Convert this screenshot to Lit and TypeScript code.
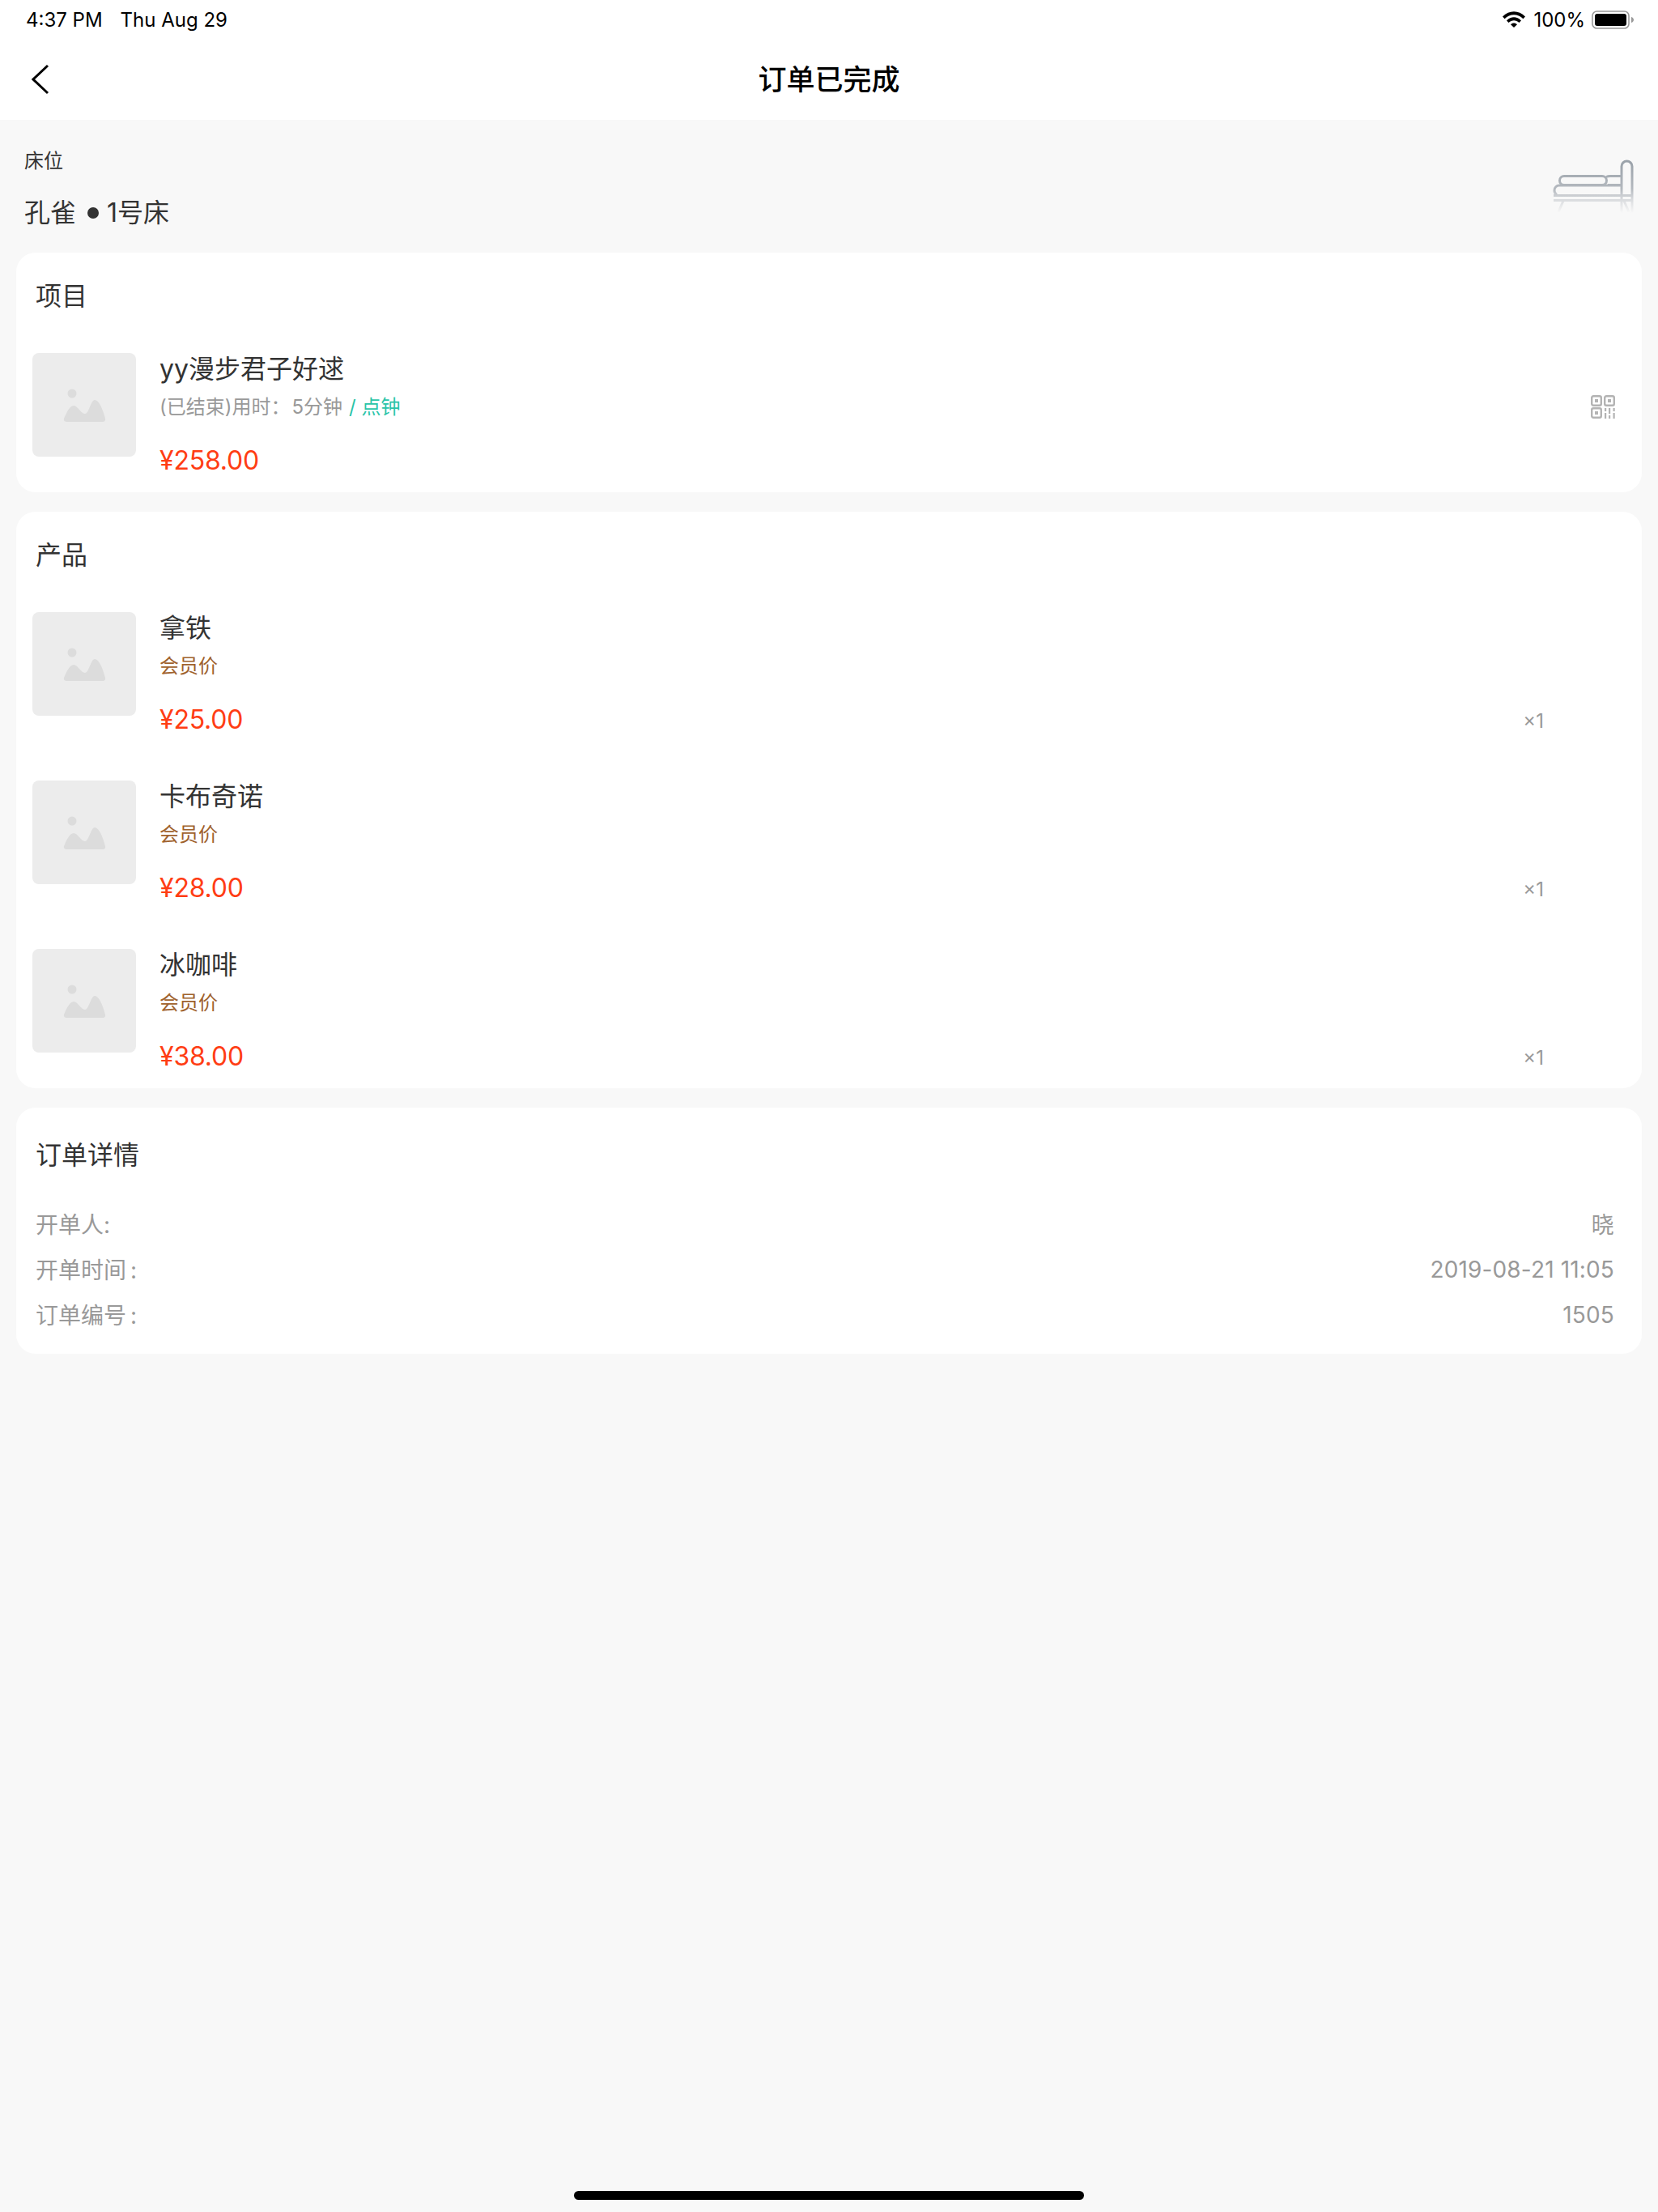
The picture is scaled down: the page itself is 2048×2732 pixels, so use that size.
import { LitElement, css, html, svg } from "lit";
import { customElement } from "lit/decorators.js";

interface Product {
    name: string;
    price: string;
}

const PRODUCTS: Product[] = [
    { name: "拿铁", price: "¥25.00" },
    { name: "卡布奇诺", price: "¥28.00" },
    { name: "冰咖啡", price: "¥38.00" },
];

const DETAILS: [string, string][] = [
    ["开单人:", "晓"],
    ["开单时间\u2009:", "2019-08-21 11:05"],
    ["订单编号\u2009:", "1505"],
];

const thumb = html`
    <svg class="thumb" viewBox="0 0 128 128" width="128" height="128">
        <rect width="128" height="128" rx="8" fill="#ececec"></rect>
        <circle cx="49" cy="50" r="5.5" fill="#dcdcdc"></circle>
        <path
            fill="#dcdcdc"
            d="M39 81C42 74 46 65 51 65C56 65 60 75 65 75C70 75 72 58 77 58C83 58 88 73 90 81C90.5 84 89 85 87 85L43 85C40 85 38.5 84 39 81Z"
        ></path>
    </svg>
`;

const bedIcon = svg`
    <defs>
        <linearGradient id="bedFade" gradientUnits="userSpaceOnUse" x1="0" y1="0" x2="0" y2="66">
            <stop offset="0" stop-color="#98a0a8"></stop>
            <stop offset="0.55" stop-color="#b4b9bf"></stop>
            <stop offset="0.75" stop-color="#d9dbde"></stop>
            <stop offset="1" stop-color="#f8f8f8"></stop>
        </linearGradient>
    </defs>
    <g fill="none" stroke="url(#bedFade)" stroke-width="3">
        <path d="M85 66V8.500a6.500 6.500 0 0 1 13 0V66"></path>
        <rect x="8.500" y="20.500" width="58" height="11" rx="5.500"></rect>
        <path d="M66 21.500q2-1 5-1H85M68 31.500H85"></path>
        <path d="M85 32H8a6 6 0 0 0-6 6a6 6 0 0 0 3 5.500"></path>
        <path d="M1 44.500H99M1 50.500H99"></path>
        <path d="M13 51L7 65M88 51L94 65"></path>
    </g>
`;

const qrIcon = svg`
    <g fill="none" stroke="#b3b3b3" stroke-width="2.4">
        <rect x="1.200" y="1.200" width="11.600" height="11.600" rx="2"></rect>
        <rect x="17.200" y="1.200" width="11.600" height="11.600" rx="2"></rect>
        <rect x="1.200" y="16.200" width="11.600" height="11.600" rx="2"></rect>
    </g>
    <g fill="#b3b3b3">
        <rect x="5" y="5" width="4" height="4"></rect>
        <rect x="21" y="5" width="4" height="4"></rect>
        <rect x="5" y="20" width="4" height="4"></rect>
        <rect x="17" y="16" width="2.200" height="4"></rect>
        <rect x="17" y="22" width="2.200" height="7"></rect>
        <rect x="22" y="16" width="2.200" height="7"></rect>
        <rect x="22" y="25" width="2.200" height="4"></rect>
        <rect x="27.500" y="16" width="2.200" height="4"></rect>
        <rect x="27.500" y="22" width="2.200" height="7"></rect>
    </g>
`;

@customElement("app-root")
export class AppRoot extends LitElement {
    render() {
        return html`
            <div class="page">
                <header class="top">
                    <div class="status">
                        <span class="clock">4:37 PM</span>
                        <span>Thu Aug 29</span>
                        <span class="status-right">
                            <svg viewBox="0 0 28 20" width="28" height="20">
                                <path d="M0 6.500C8-2 20-2 28 6.500L25.400 9.200C18.800 2.600 9.200 2.600 2.600 9.200Z"></path>
                                <path d="M5 11.400C10.400 6 17.600 6 23 11.400L20.400 14C16.400 10.400 11.600 10.400 7.600 14Z"></path>
                                <path d="M10 16.200C12.400 14 15.600 14 18 16.200L14 20Z"></path>
                            </svg>
                            <span class="pct">100%</span>
                            <svg viewBox="0 0 52 23" width="52" height="23">
                                <rect x="1" y="1" width="45" height="21" rx="5.500" fill="none" stroke="#999" stroke-width="1.600"></rect>
                                <rect x="4" y="4" width="39" height="15" rx="3"></rect>
                                <path d="M49 8c2 .6 3 2 3 3.500s-1 2.900-3 3.500Z" fill="#999"></path>
                            </svg>
                        </span>
                    </div>
                    <div class="nav">
                        <svg class="back" viewBox="0 0 22 38" width="22" height="38">
                            <path d="M20 2L2 19L20 36" fill="none" stroke="#000" stroke-width="3"></path>
                        </svg>
                        <h1>订单已完成</h1>
                    </div>
                </header>

                <section class="bed">
                    <div>
                        <div class="bed-label">床位</div>
                        <div class="bed-name">孔雀<span class="dot"></span>1号床</div>
                    </div>
                    <svg class="bed-icon" viewBox="0 0 100 66" width="100" height="66">${bedIcon}</svg>
                </section>

                <main class="cards">
                    <section class="card">
                        <h2>项目</h2>
                        <div class="row">
                            ${thumb}
                            <div class="info">
                                <div class="name">yy漫步君子好逑</div>
                                <div class="sub">(已结束)用时：<span class="time">5分钟</span><span class="green">/ 点钟</span></div>
                                <div class="price">¥258.00</div>
                            </div>
                            <svg class="qr" viewBox="0 0 30 30" width="30" height="30">${qrIcon}</svg>
                        </div>
                    </section>

                    <section class="card">
                        <h2>产品</h2>
                        <div class="rows">
                            ${PRODUCTS.map(
                                (p) => html`
                                    <div class="row">
                                        ${thumb}
                                        <div class="info">
                                            <div class="name">${p.name}</div>
                                            <div class="sub member">会员价</div>
                                            <div class="price">${p.price}</div>
                                        </div>
                                        <span class="qty">×1</span>
                                    </div>
                                `
                            )}
                        </div>
                    </section>

                    <section class="card details">
                        <h2>订单详情</h2>
                        ${DETAILS.map(
                            ([k, v]) => html`
                                <div class="detail"><span class="label">${k}</span><span class="value">${v}</span></div>
                            `
                        )}
                    </section>
                </main>

                <div class="home"></div>
            </div>
        `;
    }

    static styles = css`
        :host {
            display: block;
            font-family: Inter, "Noto Sans CJK SC", sans-serif;
            color: #333;
        }

        .page {
            display: flex;
            flex-direction: column;
            min-height: 2732px;
            background: #f8f8f8;
        }

        .top {
            height: 148px;
            background: #fff;
            color: #000;
        }

        .status {
            display: flex;
            align-items: center;
            height: 48px;
            padding: 0 30px 0 32px;
            font-size: 24px;
        }

        .clock {
            margin-right: 22px;
        }

        .status-right {
            display: flex;
            align-items: center;
            margin-left: auto;
        }

        .status-right svg {
            display: block;
        }

        .pct {
            margin: 0 8px 0 10px;
        }

        .nav {
            position: relative;
            display: flex;
            align-items: center;
            justify-content: center;
            height: 100px;
            padding-bottom: 6px;
            box-sizing: border-box;
        }

        .back {
            position: absolute;
            left: 39px;
            top: 31px;
        }

        h1 {
            margin: 0;
            font-size: 35px;
            font-weight: 500;
        }

        .bed {
            display: flex;
            justify-content: space-between;
            height: 164px;
            padding: 0 30px;
            box-sizing: border-box;
        }

        .bed-label {
            margin-top: 33px;
            font-size: 24px;
            line-height: 36px;
        }

        .bed-name {
            display: flex;
            align-items: center;
            margin-top: 22px;
            font-size: 32px;
            line-height: 48px;
        }

        .dot {
            width: 14px;
            height: 14px;
            margin: 0 10px 0 14px;
            border-radius: 50%;
            background: #333;
        }

        .bed-icon {
            margin-top: 49px;
        }

        .cards {
            display: flex;
            flex-direction: column;
            gap: 24px;
            padding: 0 20px;
        }

        .card {
            padding: 0 34px 0 20px;
            background: #fff;
            border-radius: 24px;
        }

        h2 {
            margin: 0;
            padding: 30px 0 0 4px;
            height: 124px;
            box-sizing: border-box;
            font-size: 32px;
            line-height: 48px;
            font-weight: 400;
        }

        .rows {
            display: flex;
            flex-direction: column;
            gap: 36px;
        }

        .row {
            display: flex;
            height: 172px;
            align-items: flex-start;
        }

        .thumb {
            flex: none;
            display: block;
        }

        .info {
            flex: 1;
            margin-left: 29px;
        }

        .name {
            font-size: 32px;
            line-height: 40px;
        }

        .sub {
            margin-top: 9px;
            font-size: 24px;
            line-height: 36px;
            color: #999;
        }

        .time {
            margin-left: 2px;
        }

        .green {
            margin-left: 8px;
            color: #2bc4a8;
        }

        .member {
            color: #a0622d;
        }

        .price {
            margin-top: 28px;
            font-size: 32px;
            line-height: 40px;
            letter-spacing: -0.2px;
            color: #ff3d14;
        }

        .qr {
            flex: none;
            margin: 52px -1px 0 0;
        }

        .qty {
            flex: none;
            align-self: flex-end;
            margin: 0 87px 22px 0;
            font-size: 24px;
            line-height: 30px;
            color: #999;
        }

        .details {
            height: 304px;
            box-sizing: border-box;
        }

        .details h2 {
            height: 116px;
            padding-top: 35px;
        }

        .detail {
            display: flex;
            justify-content: space-between;
            height: 56px;
            padding-left: 4px;
            align-items: center;
            font-size: 28px;
            color: #999;
        }

        /* cjk glyphs sit a little low next to the latin digits */
        .label,
        .detail:nth-child(2) .value {
            margin-bottom: 3px;
        }

        .value {
            letter-spacing: 0.15px;
        }

        .home {
            align-self: center;
            width: 630px;
            height: 11px;
            margin: auto 0 15px;
            background: #000;
            border-radius: 6px;
        }
    `;
}
